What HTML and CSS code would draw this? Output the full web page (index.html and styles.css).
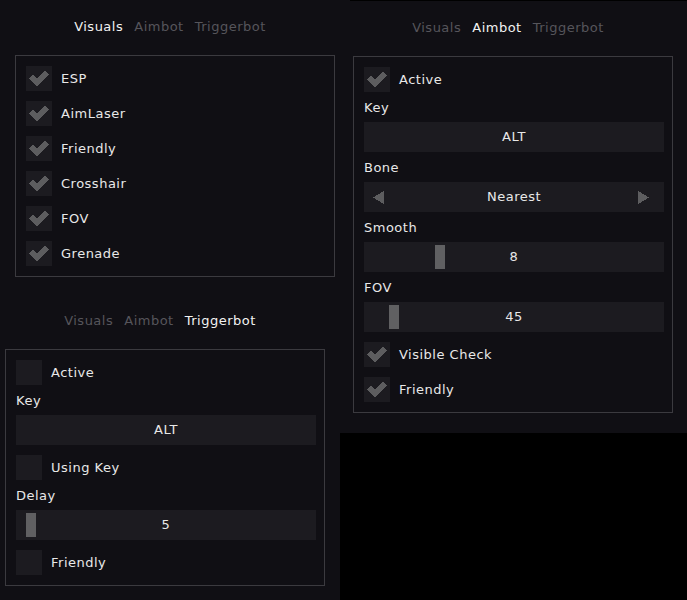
FILE: index.html
```html
<!DOCTYPE html>
<html lang="en">
<head>
  <meta charset="UTF-8">
  <title>Menu</title>
  <link rel="stylesheet" href="styles.css">
</head>
<body>
  <!-- visuals tab -->
  <div class="window win-visuals">
    <div class="tabs">
      <span class="tab active">Visuals</span>
      <span class="tab">Aimbot</span>
      <span class="tab">Triggerbot</span>
    </div>
    <div class="panel">
      <div class="check on"><span class="box"><svg viewBox="0 0 26 25"><polyline points="5,10.6 11,16.6 21,6.6"/></svg></span>ESP</div>
      <div class="check on"><span class="box"><svg viewBox="0 0 26 25"><polyline points="5,10.6 11,16.6 21,6.6"/></svg></span>AimLaser</div>
      <div class="check on"><span class="box"><svg viewBox="0 0 26 25"><polyline points="5,10.6 11,16.6 21,6.6"/></svg></span>Friendly</div>
      <div class="check on"><span class="box"><svg viewBox="0 0 26 25"><polyline points="5,10.6 11,16.6 21,6.6"/></svg></span>Crosshair</div>
      <div class="check on"><span class="box"><svg viewBox="0 0 26 25"><polyline points="5,10.6 11,16.6 21,6.6"/></svg></span>FOV</div>
      <div class="check on"><span class="box"><svg viewBox="0 0 26 25"><polyline points="5,10.6 11,16.6 21,6.6"/></svg></span>Grenade</div>
    </div>
  </div>

  <!-- triggerbot tab -->
  <div class="window win-trigger">
    <div class="tabs">
      <span class="tab">Visuals</span>
      <span class="tab">Aimbot</span>
      <span class="tab active">Triggerbot</span>
    </div>
    <div class="panel">
      <div class="check"><span class="box"></span>Active</div>
      <div class="field">
        <div class="label">Key</div>
        <div class="input">ALT</div>
      </div>
      <div class="check"><span class="box"></span>Using Key</div>
      <div class="field">
        <div class="label">Delay</div>
        <div class="slider"><span class="knob" style="left:10px"></span>5</div>
      </div>
      <div class="check"><span class="box"></span>Friendly</div>
    </div>
  </div>

  <!-- aimbot tab -->
  <div class="window win-aimbot">
    <div class="tabs">
      <span class="tab">Visuals</span>
      <span class="tab active">Aimbot</span>
      <span class="tab">Triggerbot</span>
    </div>
    <div class="panel">
      <div class="check on"><span class="box"><svg viewBox="0 0 26 25"><polyline points="5,10.6 11,16.6 21,6.6"/></svg></span>Active</div>
      <div class="field">
        <div class="label">Key</div>
        <div class="input">ALT</div>
      </div>
      <div class="field">
        <div class="label">Bone</div>
        <div class="select">
          <svg class="arrow left" viewBox="0 0 11 13"><polygon points="0,6.5 11,0 11,13"/></svg>
          <span>Nearest</span>
          <svg class="arrow right" viewBox="0 0 11 13"><polygon points="11,6.5 0,0 0,13"/></svg>
        </div>
      </div>
      <div class="field">
        <div class="label">Smooth</div>
        <div class="slider"><span class="knob" style="left:71px"></span>8</div>
      </div>
      <div class="field">
        <div class="label">FOV</div>
        <div class="slider"><span class="knob" style="left:25px"></span>45</div>
      </div>
      <div class="check on"><span class="box"><svg viewBox="0 0 26 25"><polyline points="5,10.6 11,16.6 21,6.6"/></svg></span>Visible Check</div>
      <div class="check on"><span class="box"><svg viewBox="0 0 26 25"><polyline points="5,10.6 11,16.6 21,6.6"/></svg></span>Friendly</div>
    </div>
  </div>
</body>
</html>
```

FILE: styles.css
```css
html, body {
  margin:0;
  padding:0;
  background:#000;
  width:687px;
  height:600px;
  overflow:hidden;
  position:relative;
  font-family:"DejaVu Sans", sans-serif;
  font-size:13px;
  letter-spacing:0.5px;
  color:#e8e8e8;
}
.window {
  position:absolute;
  background:#100f14;
  box-sizing:border-box;
  padding-top:19px;
}
.win-visuals { left:0; top:0; width:350px; height:433px; padding-left:15px; }
.win-trigger { left:0; top:294px; width:340px; height:306px; padding-left:5px; }
.win-aimbot  { left:350px; top:1px; width:337px; height:432px; padding-left:3px; }

.tabs {
  width:320px;
  box-sizing:border-box;
  padding-right:10px;
  display:flex;
  justify-content:center;
  gap:11px;
  line-height:15px;
  margin-bottom:21px;
}
.tab { color:#56555b; }
.tab.active { color:#f2f2f2; }

.panel {
  width:300px;
  border:1px solid #3b3a3f;
  padding:10px 8px 10px 10px;
  display:flex;
  flex-direction:column;
  gap:10px;
}

.check {
  display:flex;
  align-items:center;
  height:25px;
  line-height:15px;
}
.box {
  width:26px;
  height:25px;
  background:#1c1b20;
  margin-right:9px;
  flex-shrink:0;
}
.box svg {
  display:block;
  width:26px;
  height:25px;
}
.box polyline {
  fill:none;
  stroke:#5d5d5f;
  stroke-width:5.5;
  stroke-linejoin:miter;
  shape-rendering:crispEdges;
}

.field {
  display:flex;
  flex-direction:column;
}
.label {
  height:20px;
  line-height:12px;
}
.input, .slider, .select {
  height:30px;
  line-height:30px;
  background:#1c1b20;
  text-align:center;
}
.slider { position:relative; }
.knob {
  position:absolute;
  top:3px;
  bottom:3px;
  width:10px;
  background:#606062;
}
.select {
  display:grid;
  grid-template-columns:1fr auto 1fr;
  align-items:center;
}
.arrow {
  width:11px;
  height:13px;
  fill:#5d5d5f;
  shape-rendering:crispEdges;
}
.arrow.left { justify-self:start; margin-left:9px; }
.arrow.right { justify-self:end; margin-right:15px; }
```
